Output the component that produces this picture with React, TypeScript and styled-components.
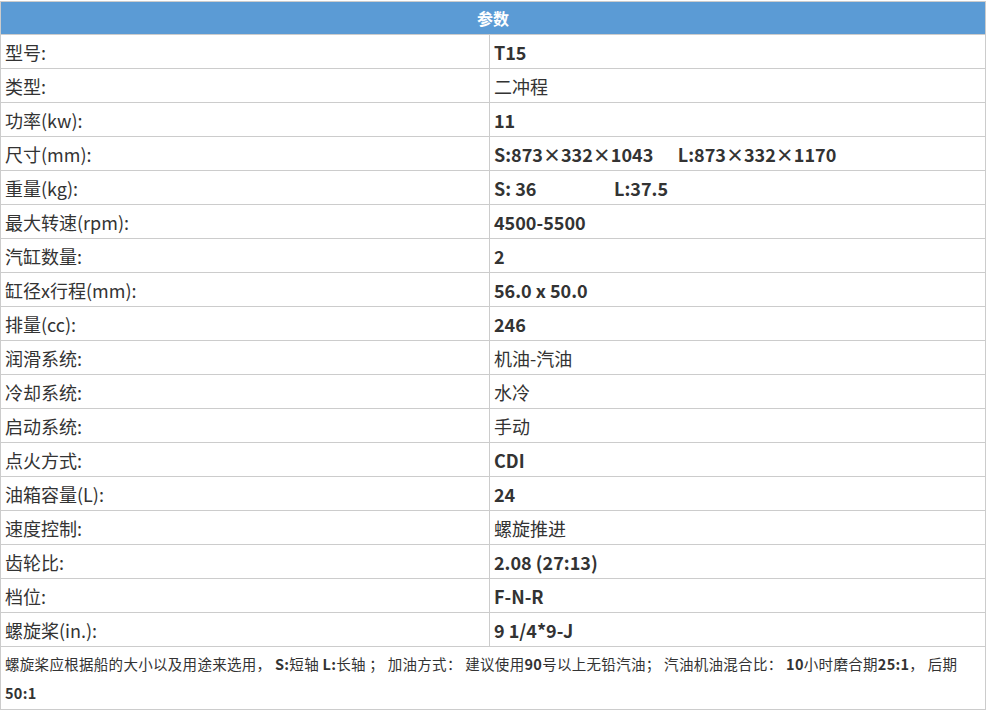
import React from "react";
import styled, { createGlobalStyle } from "styled-components";

const rows: [string, string, boolean][] = [
  ["型号:", "T15", true],
  ["类型:", "二冲程", false],
  ["功率(kw):", "11", true],
  ["尺寸(mm):", "S:873×332×1043\u00a0\u00a0\u00a0\u00a0\u00a0\u00a0L:873×332×1170", true],
  ["重量(kg):", "S: 36\u00a0\u00a0\u00a0\u00a0\u00a0\u00a0\u00a0\u00a0\u00a0\u00a0\u00a0\u00a0\u00a0\u00a0\u00a0\u00a0\u00a0\u00a0\u00a0L:37.5", true],
  ["最大转速(rpm):", "4500-5500", true],
  ["汽缸数量:", "2", true],
  ["缸径x行程(mm):", "56.0 x 50.0", true],
  ["排量(cc):", "246", true],
  ["润滑系统:", "机油-汽油", false],
  ["冷却系统:", "水冷", false],
  ["启动系统:", "手动", false],
  ["点火方式:", "CDI", true],
  ["油箱容量(L):", "24", true],
  ["速度控制:", "螺旋推进", false],
  ["齿轮比:", "2.08 (27:13)", true],
  ["档位:", "F-N-R", true],
  ["螺旋桨(in.):", "9 1/4*9-J", true],
];

const Global = createGlobalStyle`
  body { margin: 0; background: #fff; font-family: "Noto Sans CJK SC", "Noto Sans", sans-serif; color: #333; }
`;

const Table = styled.table`
  width: 986px;
  margin-top: 1px;
  border-collapse: collapse;
  border: 1px solid #ccc;
`;

const Head = styled.th`
  background: #5b9bd5;
  color: #fff;
  font-size: 16px;
  font-weight: bold;
  height: 32px;
  padding: 0;
  border: 1px solid #ccc;
`;

const Cell = styled.td<{ $bold?: boolean }>`
  height: 33px;
  padding: 0 0 0 4px;
  font-size: 18px;
  font-weight: ${(p) => (p.$bold ? "bold" : "normal")};
  border: 1px solid #ccc;
  white-space: pre;
  line-height: 1;
`;

const Label = styled(Cell)`
  width: 484px;
`;

const Note = styled.td`
  padding: 2px 10px 2px 4px;
  font-size: 14.5px;
  letter-spacing: 0.3px;
  line-height: 29px;
  border: 1px solid #ccc;
  b { font-weight: bold; }
`;

export default function App() {
  return (
    <>
      <Global />
      <Table>
        <thead>
          <tr>
            <Head colSpan={2}>参数</Head>
          </tr>
        </thead>
        <tbody>
          {rows.map(([k, v, b]) => (
            <tr key={k}>
              <Label>{k}</Label>
              <Cell $bold={b}>{v}</Cell>
            </tr>
          ))}
          <tr>
            <Note colSpan={2}>
              螺旋桨应根据船的大小以及用途来选用， <b>S:</b>短轴 <b>L:</b>长轴 ； 加油方式： 建议使用<b>90</b>号以上无铅汽油； 汽油机油混合比： <b>10</b>小时磨合期<b>25:1</b>， 后期 <b>50:1</b>
            </Note>
          </tr>
        </tbody>
      </Table>
    </>
  );
}
